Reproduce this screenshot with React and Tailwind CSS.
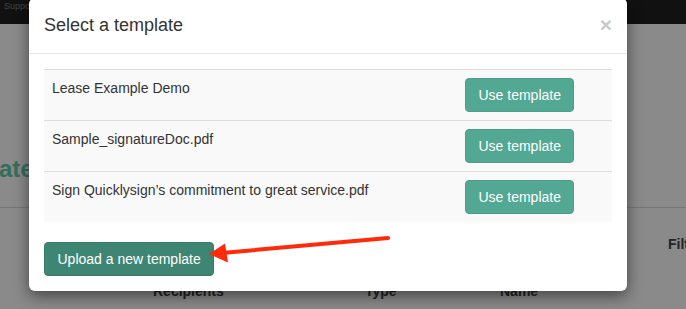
import React from 'react';

const templates = [
  'Lease Example Demo',
  'Sample_signatureDoc.pdf',
  'Sign Quicklysign\u2019s commitment to great service.pdf',
];

const font = "font-['Liberation_Sans','Helvetica',Arial,sans-serif]";

const Arrow = () => (
  <svg
    className="absolute inset-0 pointer-events-none"
    width="686"
    height="309"
    viewBox="0 0 686 309"
  >
    <line x1="388" y1="238" x2="222" y2="253" stroke="#ff2a0a" strokeWidth="4" strokeLinecap="round" />
    <polygon points="209,254 225,243.5 228,262.5" fill="#ff2a0a" />
  </svg>
);

const App = () => {
  return (
    <div className={`relative w-[686px] h-[309px] overflow-hidden bg-[#8a8a8a] ${font}`}>
      {/* Page behind the dialog */}
      <div className="flex flex-col">
        <div className="h-[24px] bg-[#111] px-1 text-[9px] leading-[12px] text-[#444]">Support</div>
        <h1 className="mt-[130px] ml-[-70px] text-[24px] leading-[30px] font-bold text-[#356d5c] whitespace-nowrap">
          Templates
        </h1>
        <div className="mt-[23px] h-px bg-[#777]" />
        <div className="mt-[26px] pl-[668px] text-[14px] leading-5 font-bold text-[#222] whitespace-nowrap">
          Filter
        </div>
        <div className="mt-[27px] flex text-[14px] leading-5 font-bold text-[#222] whitespace-nowrap">
          <span className="ml-[153px] w-[212px]">Recipients</span>
          <span className="w-[135px]">Type</span>
          <span>Name</span>
        </div>
      </div>

      {/* Modal */}
      <div className="absolute left-[29px] top-[-2px] w-[598px] bg-white rounded-[6px] shadow-[0_5px_15px_rgba(0,0,0,0.5)]">
        <div className="flex items-start justify-between p-[15px] border-b border-[#e5e5e5]">
          <h4 className="text-[18px] leading-[25px] text-[#333]">Select a template</h4>
          <span className="mt-[-1px] text-[21px] leading-[25px] font-bold text-[#c9c9c9]">×</span>
        </div>
        <div className="p-[15px]">
          <div className="flex flex-col">
            {templates.map((name) => (
              <div key={name} className="flex border-t border-[#ddd] bg-[#f9f9f9]">
                <div className="flex-1 p-2 text-[14px] leading-5 text-[#333]">{name}</div>
                <div className="w-[155px] p-2">
                  <button className="px-[12.5px] py-[6px] rounded-[4px] border border-[#4b9e89] bg-[#52a893] text-[14px] leading-5 text-white">
                    Use template
                  </button>
                </div>
              </div>
            ))}
          </div>
          <button className="mt-5 px-[12.5px] py-[6px] rounded-[4px] border border-[#387a69] bg-[#3f8574] text-[14px] leading-5 text-white">
            Upload a new template
          </button>
        </div>
      </div>

      <Arrow />
    </div>
  );
};

export default App;
